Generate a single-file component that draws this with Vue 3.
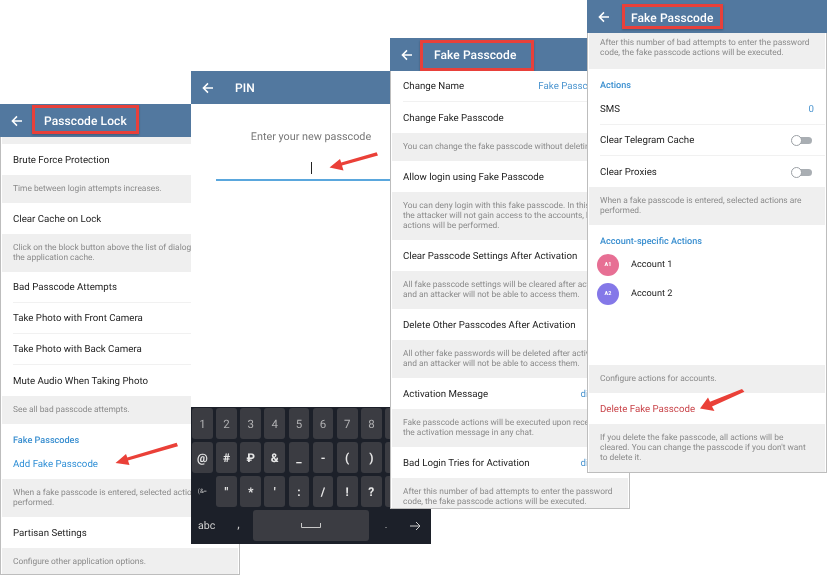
<script setup>
const lock = [
  { t: 'gap' },
  { t: 'row', text: 'Brute Force Protection' },
  { t: 'help', text: 'Time between login attempts increases.' },
  { t: 'row', text: 'Clear Cache on Lock' },
  { t: 'help', text: 'Click on the block button above the list of dialogs to clear\nthe application cache.' },
  { t: 'row', text: 'Bad Passcode Attempts', line: true },
  { t: 'row', text: 'Take Photo with Front Camera', line: true },
  { t: 'row', text: 'Take Photo with Back Camera', line: true },
  { t: 'row', text: 'Mute Audio When Taking Photo' },
  { t: 'help', text: 'See all bad passcode attempts.' },
  { t: 'head', text: 'Fake Passcodes' },
  { t: 'link', text: 'Add Fake Passcode' },
  { t: 'help', text: 'When a fake passcode is entered, selected actions are\nperformed.' },
  { t: 'row', text: 'Partisan Settings' },
  { t: 'help', text: 'Configure other application options.' },
]
const fake = [
  { t: 'row', text: 'Change Name', value: 'Fake Passcode 11', line: true },
  { t: 'row', text: 'Change Fake Passcode' },
  { t: 'help', text: 'You can change the fake passcode without deleting it.' },
  { t: 'row', text: 'Allow login using Fake Passcode' },
  { t: 'help', text: 'You can deny login with this fake passcode. In this case\nthe attacker will not gain access to the accounts, but the\nactions will be performed.' },
  { t: 'row', text: 'Clear Passcode Settings After Activation' },
  { t: 'help', text: 'All fake passcode settings will be cleared after activation\nand an attacker will not be able to access them.' },
  { t: 'row', text: 'Delete Other Passcodes After Activation' },
  { t: 'help', text: 'All other fake passwords will be deleted after activation\nand an attacker will not be able to access them.' },
  { t: 'row', text: 'Activation Message', value: 'disabled' },
  { t: 'help', text: 'Fake passcode actions will be executed upon receiving\nthe activation message in any chat.' },
  { t: 'row', text: 'Bad Login Tries for Activation', value: 'disabled' },
  { t: 'help', text: 'After this number of bad attempts to enter the password\ncode, the fake passcode actions will be executed.' },
]
const actions = [
  { t: 'help', cut: true, text: 'After this number of bad attempts to enter the password\ncode, the fake passcode actions will be executed.' },
  { t: 'head', text: 'Actions' },
  { t: 'row', text: 'SMS', value: '0', line: true },
  { t: 'row', text: 'Clear Telegram Cache', toggle: true, line: true },
  { t: 'row', text: 'Clear Proxies', toggle: true },
  { t: 'help', text: 'When a fake passcode is entered, selected actions are\nperformed.' },
  { t: 'head', text: 'Account-specific Actions' },
  { t: 'account', text: 'Account 1', initials: 'A1', color: '#e76f94' },
  { t: 'account', text: 'Account 2', initials: 'A2', color: '#8478e8' },
  { t: 'space' },
  { t: 'help', text: 'Configure actions for accounts.' },
  { t: 'danger', text: 'Delete Fake Passcode' },
  { t: 'help', text: 'If you delete the fake passcode, all actions will be\ncleared. You can change the passcode if you don\'t want\nto delete it.' },
]
const screens = [
  { id: 'lock', title: 'Passcode Lock', boxed: true, items: lock },
  { id: 'pin', title: 'PIN', boxed: false, items: [] },
  { id: 'fake', title: 'Fake Passcode', boxed: true, items: fake },
  { id: 'actions', title: 'Fake Passcode', boxed: true, items: actions },
]
const keyRows = [
  ['1', '2', '3', '4', '5', '6', '7', '8', '9', '0'],
  ['@', '#', '₽', '&', '_', '-', '(', ')', '+', '⌫'],
]
const thirdRow = ['"', '*', "'", ':', '/', '!', '?', ';']
</script>

<template>
  <div class="canvas">
    <section v-for="s in screens" :key="s.id" class="screen" :class="s.id">
      <header class="bar">
        <svg class="back" viewBox="0 0 12 12" width="12" height="12">
          <path d="M11 6H1.6M6 1.4 1.4 6 6 10.6" fill="none" stroke="#fff" stroke-width="1.5" />
        </svg>
        <h1 class="title" :class="{ boxed: s.boxed }">{{ s.title }}</h1>
      </header>

      <div v-if="s.id === 'pin'" class="pin-body">
        <p class="prompt">Enter your new passcode</p>
        <div class="field"><i class="caret"></i></div>
        <div class="keyboard">
          <div v-for="(row, i) in keyRows" :key="i" class="keys">
            <span v-for="k in row" :key="k" class="key" :class="{ num: i === 0 }">{{ k }}</span>
          </div>
          <div class="keys">
            <span class="key flat tiny">(&amp;=</span>
            <span v-for="k in thirdRow" :key="k" class="key">{{ k }}</span>
            <span class="key flat"></span>
          </div>
          <div class="keys last">
            <span class="abc">abc</span>
            <span class="punct">,</span>
            <span class="space"><svg width="20" height="5" viewBox="0 0 20 5"><path d="M.5 0v4.5h19V0" fill="none" stroke="#c8c8c8" /></svg></span>
            <span class="punct dot">.</span>
            <svg class="enter" width="12" height="10" viewBox="0 0 12 10"><path d="M1 5h10M7 1l4 4-4 4" fill="none" stroke="#d0d0d0" /></svg>
          </div>
        </div>
      </div>

      <div v-else class="list">
        <template v-for="(item, i) in s.items" :key="i">
          <div v-if="item.t === 'gap'" class="gap"></div>
          <div v-else-if="item.t === 'space'" class="spacer"></div>
          <p v-else-if="item.t === 'help'" class="help" :class="{ cut: item.cut }">{{ item.text }}</p>
          <div v-else-if="item.t === 'head'" class="head">{{ item.text }}</div>
          <div v-else-if="item.t === 'link'" class="row link">{{ item.text }}</div>
          <div v-else-if="item.t === 'danger'" class="row danger">{{ item.text }}</div>
          <div v-else-if="item.t === 'account'" class="account">
            <span class="avatar" :style="{ background: item.color }">{{ item.initials }}</span>
            <span>{{ item.text }}</span>
          </div>
          <div v-else class="row" :class="{ line: item.line }">
            <span>{{ item.text }}</span>
            <span v-if="item.value" class="value">{{ item.value }}</span>
            <span v-if="item.toggle" class="toggle"><i></i></span>
          </div>
        </template>
      </div>
    </section>

    <svg class="arrows" width="827" height="575" viewBox="0 0 827 575">
      <g fill="#ea4038">
        <path d="M176.6 442.8 178 446.2 128 460.4 129.5 465 115.5 463 126 454 127.3 457.4Z" />
        <path d="M376.6 152.2 378 155.4 342 165.6 343.5 170.4 329.5 167.5 340 159 341.2 162.6Z" />
        <path d="M742 389 744.4 391.8 712 406.4 714.5 411 700 408.5 708 397.4 710 401.8Z" />
      </g>
    </svg>
  </div>
</template>

<style>
html, body { background: #fff; }
body { overflow: hidden; }
</style>

<style scoped>
.canvas {
  position: relative;
  width: 827px;
  height: 575px;
  overflow: hidden;
  background: #fff;
  font-family: Roboto, "Liberation Sans", sans-serif;
  text-rendering: geometricPrecision;
  color: #1c1c1c;
  filter: blur(.3px);
}
.screen {
  position: absolute;
  width: 240px;
  display: flex;
  flex-direction: column;
  background: #fff;
}
.lock { left: 0; top: 104px; height: 471px; }
.pin { left: 191px; top: 71px; height: 473px; }
.fake { left: 390px; top: 38px; height: 471px; }
.actions { left: 587px; top: 0; height: 473px; }

.bar {
  flex: none;
  height: 33px;
  display: flex;
  align-items: center;
  padding-left: 11px;
  box-sizing: border-box;
  background: #52789f;
  color: #fff;
}
.back { flex: none; margin-right: 21px; }
.title {
  margin: 0;
  font-size: 12px;
  font-weight: 500;
  letter-spacing: .1px;
  white-space: nowrap;
}
.title.boxed {
  box-sizing: border-box;
  border: 3px solid #e8403a;
  box-shadow: 0 1px 2px rgba(0, 0, 0, .25);
  display: flex;
  align-items: center;
}
.lock .title.boxed { margin: 0 0 2px -12px; padding: 2px 9px 0; height: 29px; }
.fake .title.boxed { margin-left: -14px; align-self: flex-end; padding: 0 15px 2px 11px; height: 31px; }
.actions .title.boxed { margin-left: -9px; padding: 2px 7px 0 6px; height: 25px; }

.list {
  flex: 1;
  min-height: 0;
  display: flex;
  flex-direction: column;
  box-sizing: border-box;
  padding: 0 1px;
  border: 1px solid #bdbdbd;
  border-top: 0;
  background: #fff;
  overflow: hidden;
}
.gap { flex: none; height: 7px; background: #efefef; }
.spacer { flex: 1; }
.row {
  flex: none;
  height: 31px;
  display: flex;
  align-items: center;
  justify-content: space-between;
  margin-left: 11px;
  padding: 1px 11px 0 0;
  font-size: 9.7px;
  white-space: nowrap;
  box-sizing: border-box;
}
.row.line { border-bottom: 1px solid #f1f1f1; }
.value { color: #4a94cf; }
.link { color: #2f8fd6; height: 30px; }
.danger { color: #c9444a; }
.help {
  flex: none;
  margin: 0;
  padding: 9px 11px;
  background: #efefef;
  color: #8a8a8a;
  font-size: 8.4px;
  line-height: 10px;
  white-space: pre;
}
.help.cut { padding-top: 5px; padding-bottom: 11px; }
.head {
  flex: none;
  margin-left: 11px;
  height: 13px;
  padding-top: 12px;
  line-height: 11px;
  font-size: 9.1px;
  font-weight: 500;
  color: #3a8fd0;
}
.account {
  flex: none;
  height: 29px;
  display: flex;
  align-items: center;
  gap: 12px;
  margin-left: 8px;
  font-size: 9.2px;
}
.avatar {
  width: 22px;
  height: 22px;
  border-radius: 50%;
  display: flex;
  align-items: center;
  justify-content: center;
  color: #fff;
  font-size: 5.5px;
  font-weight: 700;
}
.toggle {
  position: relative;
  width: 20px;
  height: 7px;
  margin-right: 2px;
  border-radius: 4px;
  background: #a9aeb3;
}
.toggle i {
  position: absolute;
  left: -1px;
  top: -2px;
  width: 11px;
  height: 11px;
  box-sizing: border-box;
  border-radius: 50%;
  background: #fff;
  border: 1px solid #9ba0a5;
}

.pin-body {
  flex: 1;
  min-height: 0;
  display: flex;
  flex-direction: column;
  align-items: center;
  background: #fff;
}
.prompt {
  margin: 26px 0 0;
  height: 13px;
  line-height: 13px;
  font-size: 10.8px;
  color: #777;
  white-space: nowrap;
}
.field {
  align-self: stretch;
  margin: 10px 25px 0;
  height: 28px;
  display: flex;
  justify-content: center;
  border-bottom: 2px solid #5aa7dd;
  box-sizing: border-box;
}
.caret {
  width: 1px;
  height: 12px;
  background: #222;
  margin-top: 9px;
}
.keyboard {
  margin-top: auto;
  align-self: stretch;
  height: 137px;
  padding: 1px 1px 3px;
  box-sizing: border-box;
  display: flex;
  flex-direction: column;
  gap: 3px;
  background: #1c2029;
}
.keys {
  flex: 1;
  display: flex;
  gap: 3.4px;
}
.key {
  flex: 1;
  min-width: 0;
  display: flex;
  align-items: center;
  justify-content: center;
  border-radius: 3px;
  background: #3b3c42;
  color: #e8e8e8;
  font-size: 12px;
  font-weight: 700;
}
.key.num { color: #b0b0b2; font-weight: 400; font-size: 11.5px; }
.key.flat { background: transparent; }
.key.tiny { font-size: 6px; font-weight: 400; color: #ccc; }
.last { align-items: stretch; gap: 0; }
.abc {
  width: 32px;
  padding-left: 6px;
  box-sizing: border-box;
  align-self: center;
  font-size: 10.6px;
  color: #cfcfcf;
}
.punct {
  width: 29px;
  text-align: center;
  align-self: center;
  font-size: 10px;
  font-weight: 700;
  color: #ccc;
}
.space {
  width: 116px;
  display: flex;
  align-items: center;
  justify-content: center;
  border-radius: 3px;
  background: #3b3c42;
}
.punct.dot { width: 34px; font-weight: 400; }
.enter { align-self: center; margin-left: 6px; }

.arrows {
  position: absolute;
  left: 0;
  top: 0;
  pointer-events: none;
}
</style>
